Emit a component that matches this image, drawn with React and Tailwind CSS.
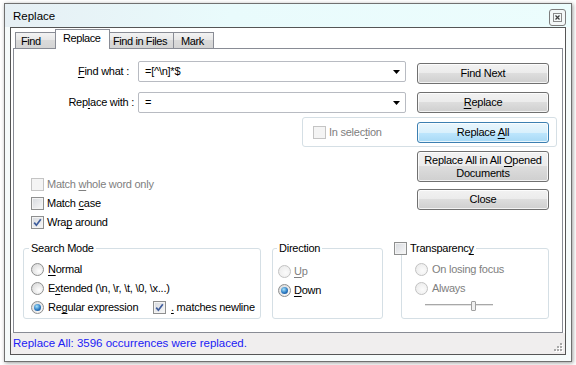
import React from 'react';

// underlined access key letter
const U = ({ children }) => (
  <span className="underline underline-offset-[2px] decoration-1">{children}</span>
);

const Check = ({ checked, disabled }) => (
  <span
    className={`w-[13px] h-[13px] shrink-0 border flex items-center justify-center ${
      disabled
        ? 'border-[#c4c4c4] bg-[#f4f4f4]'
        : 'border-[#8e8f8f] bg-[linear-gradient(135deg,#d6d9de,#f8f8f8)] shadow-[inset_0_0_0_1px_#f3f3f3]'
    }`}
  >
    {checked && (
      <svg width="9" height="9" viewBox="0 0 9 9">
        <path d="M1.2 4.6 L3.4 7.2 L7.8 1.2" fill="none" stroke="#3f5d9c" strokeWidth="1.7" />
      </svg>
    )}
  </span>
);

const Radio = ({ checked, disabled }) => (
  <span
    className={`w-[13px] h-[13px] shrink-0 rounded-full border flex items-center justify-center ${
      disabled
        ? 'border-[#c2c2c2] bg-[radial-gradient(circle_at_60%_60%,#fbfbfb,#e8e8e8)]'
        : 'border-[#8e8f8f] bg-[radial-gradient(circle_at_65%_65%,#ffffff,#d2d2d2)]'
    }`}
  >
    {checked && (
      <span className="w-[7px] h-[7px] rounded-full bg-[radial-gradient(circle_at_40%_35%,#a6e4fb,#2b79c2_55%,#143f7c)]" />
    )}
  </span>
);

const Btn = ({ children, className = '', focused }) => (
  <div
    className={`w-[132px] shrink-0 border rounded-[3px] flex flex-col items-center justify-center text-center leading-[13px] shadow-[inset_0_0_0_1px_rgba(255,255,255,0.75)] ${
      focused
        ? 'border-[#3c7fb1] bg-[linear-gradient(#eaf6fd,#d9f0fc_50%,#bee6fd_50%,#a7d9f5)]'
        : 'border-[#707070] bg-[linear-gradient(#f2f2f2,#ebebeb_50%,#dddddd_50%,#cfcfcf)]'
    } ${className}`}
  >
    {children}
  </div>
);

const Combo = ({ value }) => (
  <div className="w-[268px] h-[21px] shrink-0 border border-[#b8bbc2] rounded-[2px] bg-white flex items-center pl-[6px] pr-[5px]">
    <span className="flex-1">{value}</span>
    <svg width="7" height="4" viewBox="0 0 7 4">
      <path d="M0 0 H7 L3.5 4 Z" fill="#000" />
    </svg>
  </div>
);

const Box = ({ className = '', children }) => (
  <div className={`h-[71px] shrink-0 border border-[#d5dfe5] rounded-[3px] flex flex-col ${className}`}>
    {children}
  </div>
);

const Legend = ({ className = '', children }) => (
  <div className={`-mt-[7px] h-[13px] w-fit px-[2px] bg-white flex items-center gap-[3px] ${className}`}>
    {children}
  </div>
);

const Row = ({ children, className = '' }) => (
  <div className={`h-[19px] flex items-center ${className}`}>{children}</div>
);

const tabs = [
  { label: 'Find', w: 'w-[41px] pl-[5px]' },
  { label: 'Replace', w: 'w-[55px] pl-[7px]', active: true },
  { label: 'Find in Files', w: 'w-[65px] pl-[3px]' },
  { label: 'Mark', w: 'w-[41px] pl-[7px]' },
];

export default function App() {
  return (
    <div className="w-[576px] h-[365px] bg-white overflow-hidden pt-[3px] pl-[4px] font-['Liberation_Sans',Arial,sans-serif] text-[11px] leading-[13px] tracking-[-0.25px] text-black">
      <div className="w-[568px] h-[359px] border border-[#707070] bg-[#f6fbfb] shadow-[1px_1px_4px_rgba(0,0,0,0.4)] flex flex-col">
        {/* title bar */}
        <div className="h-[23px] shrink-0 flex items-start justify-between pl-[8px] pr-[5px] bg-[linear-gradient(90deg,#e6eff4,#e9fbfc_40%,#ecfdfd)]">
          <span className="pt-[5px] text-[11.5px] leading-[14px] tracking-normal">Replace</span>
          <div className="mt-[5px] w-[17px] h-[17px] border border-[#7d7d7d] rounded-[3px] bg-[#f4f8f8] flex items-center justify-center">
            <svg width="9" height="9" viewBox="0 0 9 9">
              <rect x="0.5" y="0.5" width="8" height="8" fill="none" stroke="#8a8a8a" />
              <path d="M2.5 2.5 L6.5 6.5 M6.5 2.5 L2.5 6.5" stroke="#3c3c3c" strokeWidth="1.2" />
            </svg>
          </div>
        </div>

        <div className="flex-1 px-[5px] pb-[6px]">
          <div className="h-full border border-[#555] bg-white flex flex-col">
            {/* tabs */}
            <div className="h-[20px] shrink-0 flex items-end pl-[4px] tracking-[-0.4px]">
              {tabs.map((t, i) =>
                t.active ? (
                  <div
                    key={t.label}
                    className={`${t.w} -ml-px h-[20px] -mb-px relative z-10 bg-white border-t border-x border-[#898c95] flex items-start pt-[2px]`}
                  >
                    {t.label}
                  </div>
                ) : (
                  <div
                    key={t.label}
                    className={`${t.w} ${i > 0 ? '-ml-px' : ''} h-[16px] border-t border-x border-[#898c95] bg-[linear-gradient(#f3f3f3,#e6e6e6_50%,#dadada_50%,#d4d4d4)] flex items-start pt-[2px]`}
                  >
                    {t.label}
                  </div>
                )
              )}
            </div>

            {/* tab panel */}
            <div className="mx-[2px] h-[285px] shrink-0 border border-[#898c95] bg-white flex flex-col">
              <div className="mt-[12px] h-[23px] flex items-start">
                <div className="w-[124px] h-[21px] flex items-center justify-end pr-[9px]">
                  <U>F</U>ind what :
                </div>
                <Combo value={'=[^\\n]*$'} />
                <Btn className="ml-[11px] mt-[2px] h-[21px]">Find Next</Btn>
              </div>

              <div className="mt-[8px] h-[21px] flex items-start">
                <div className="w-[124px] h-[21px] flex items-center justify-end pr-[4px]">
                  Rep<U>l</U>ace with :
                </div>
                <Combo value="=" />
                <Btn className="ml-[11px] h-[21px]">
                  <span>
                    <U>R</U>eplace
                  </span>
                </Btn>
              </div>

              <div className="mt-[4px] ml-[288px] w-[255px] h-[30px] border border-[#d5dfe5] rounded-[3px] flex items-center pl-[10px]">
                <Check disabled />
                <span className="ml-[3px] text-[#808080]">
                  In selec<U>t</U>ion
                </span>
                <Btn focused className="ml-auto mr-[7px] h-[21px]">
                  <span>
                    Replace <U>A</U>ll
                  </span>
                </Btn>
              </div>

              <div className="mt-[4px] flex items-start">
                <div className="ml-[17px] mt-[24px] w-[386px] flex flex-col">
                  <Row className="gap-[3px] text-[#808080]">
                    <Check disabled />
                    <span>
                      Match <U>w</U>hole word only
                    </span>
                  </Row>
                  <Row className="gap-[3px]">
                    <Check />
                    <span>
                      Match <U>c</U>ase
                    </span>
                  </Row>
                  <Row className="gap-[3px]">
                    <Check checked />
                    <span>
                      Wra<U>p</U> around
                    </span>
                  </Row>
                </div>
                <div className="flex flex-col gap-[7px]">
                  <Btn className="h-[31px]">
                    <span>
                      Replace All in All <U>O</U>pened
                    </span>
                    <span>Documents</span>
                  </Btn>
                  <Btn className="h-[21px]">Close</Btn>
                </div>
              </div>

              <div className="mt-[16px] pl-[9px] flex items-start">
                <Box className="w-[238px]">
                  <Legend className="ml-[5px]">Search Mode</Legend>
                  <div className="mt-[5px] pl-[7px] flex flex-col">
                    <Row className="gap-[4px]">
                      <Radio />
                      <span>
                        <U>N</U>ormal
                      </span>
                    </Row>
                    <Row className="gap-[4px]">
                      <Radio />
                      <span>
                        E<U>x</U>tended {'(\\n, \\r, \\t, \\0, \\x...)'}
                      </span>
                    </Row>
                    <Row>
                      <div className="w-[122px] flex items-center gap-[4px]">
                        <Radio checked />
                        <span>
                          Re<U>g</U>ular expression
                        </span>
                      </div>
                      <Check checked />
                      <span className="ml-[5px]">
                        <U>.</U> matches newline
                      </span>
                    </Row>
                  </div>
                </Box>

                <Box className="ml-[11px] w-[111px]">
                  <Legend className="ml-[4px]">Direction</Legend>
                  <div className="mt-[7px] pl-[5px] flex flex-col">
                    <Row className="gap-[3px] text-[#808080]">
                      <Radio disabled />
                      <span>
                        <U>U</U>p
                      </span>
                    </Row>
                    <Row className="gap-[3px]">
                      <Radio checked />
                      <span>
                        <U>D</U>own
                      </span>
                    </Row>
                  </div>
                </Box>

                <Box className="ml-[18px] w-[148px]">
                  <Legend className="-ml-[8px] pl-0">
                    <Check />
                    <span>
                      Transparenc<U>y</U>
                    </span>
                  </Legend>
                  <div className="mt-[5px] pl-[13px] flex flex-col text-[#808080]">
                    <Row className="gap-[4px]">
                      <Radio disabled />
                      <span>On losing focus</span>
                    </Row>
                    <Row className="gap-[4px]">
                      <Radio disabled />
                      <span>Always</span>
                    </Row>
                  </div>
                  <div className="mt-[2px] ml-[23px] h-[11px] flex items-center">
                    <div className="w-[46px] h-[3px] border-t border-[#a8a8a8] border-b border-b-white bg-[#e4e4e4]" />
                    <div className="w-[5px] h-[10px] border border-[#a0a0a0] rounded-[1px] bg-[#f0f0f0]" />
                    <div className="w-[17px] h-[3px] border-t border-[#a8a8a8] border-b border-b-white bg-[#e4e4e4]" />
                  </div>
                </Box>
              </div>
            </div>

            {/* status bar */}
            <div className="flex-1 bg-[#f0eeee] flex items-center justify-between pl-[2px] pr-[2px]">
              <span className="text-[11.5px] tracking-normal text-[#2020f5]">Replace All: 3596 occurrences were replaced.</span>
              <svg width="10" height="10" viewBox="0 0 10 10" className="self-end mb-[1px]">
                {[
                  [7, 0],
                  [4, 3],
                  [7, 3],
                  [1, 6],
                  [4, 6],
                  [7, 6],
                ].map(([x, y]) => (
                  <g key={`${x}-${y}`}>
                    <rect x={x + 1} y={y + 1} width="2" height="2" fill="#ffffff" />
                    <rect x={x} y={y} width="2" height="2" fill="#a9a9a9" />
                  </g>
                ))}
              </svg>
            </div>
          </div>
        </div>
      </div>
    </div>
  );
}
